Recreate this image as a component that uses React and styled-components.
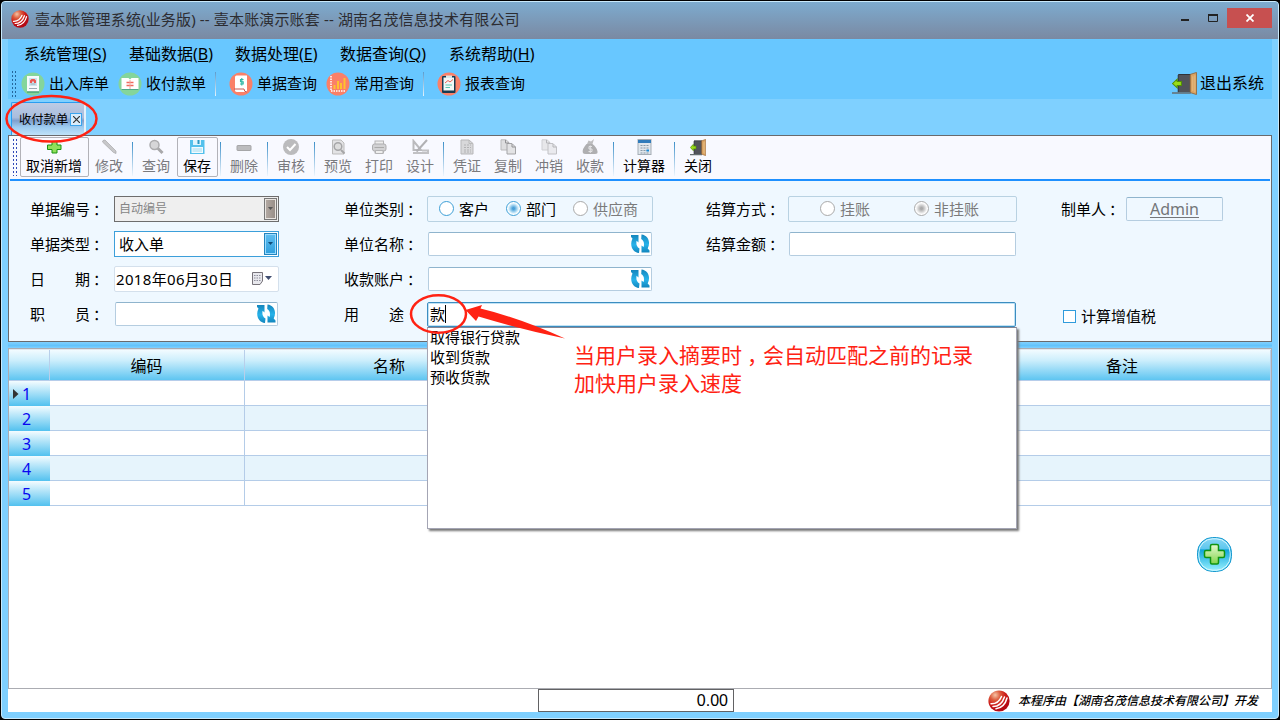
import React from "react";
import styled, { createGlobalStyle, css } from "styled-components";

const Global = createGlobalStyle`
  * { box-sizing: border-box; }
  body { margin: 0; overflow: hidden; background: #000; }
  body, button, input { font-family: "Noto Sans", "Noto Sans CJK SC", sans-serif; }
  svg { display: block; flex: none; }
`;

const Window = styled.div`
  width: 1280px;
  height: 720px;
  padding: 1px 1px 1px 1px;
  background: #000;
  color: #000;
  font-size: 15px;
  line-height: 20px;
  white-space: nowrap;
  position: relative;
  overflow: hidden;
`;
const Frame = styled.div`
  width: 1278px;
  height: 718px;
  border: 1px solid #c9e9fb;
  border-radius: 4px;
  background: #7fd0ff;
  overflow: hidden;
`;
const TitleBar = styled.header`
  height: 37px;
  display: flex;
  align-items: center;
  padding: 0 6px 3px 9px;
  background: linear-gradient(#7dabcf, #7a89a2);
  color: #2c2c31;
`;
const Title = styled.div`
  margin-left: 6px;
  flex: 1;
  letter-spacing: 0.15px;
`;
const WinControls = styled.div`
  display: flex;
  align-items: flex-start;
  height: 20px;
  margin-bottom: 2px;
`;
const WinButton = styled.div`
  width: ${(p) => p.$w}px;
  height: 20px;
  display: flex;
  align-items: center;
  justify-content: center;
  background: ${(p) => (p.$close ? "#c75050" : "transparent")};
`;
const Content = styled.div`
  margin: 0 6px 6px;
  height: 673px;
  display: flex;
  flex-direction: column;
`;
const TopPanel = styled.div`
  height: 60px;
  background: #68c7ff;
`;
const MenuBar = styled.nav`
  display: flex;
  height: 29px;
  align-items: center;
  padding: 0 0 0 16px;
  font-size: 16px;
`;
const MenuItem = styled.div`
  width: ${(p) => p.$w}px;
`;
const ToolBar = styled.div`
  height: 31px;
  display: flex;
  align-items: center;
`;
const ToolGrip = styled.div`
  width: 7px;
  margin: 0 3px 0 3px;
  height: 27px;
  background: radial-gradient(circle, #24669c 0 0.7px, transparent 1px) 0 0 / 3px 4px;
`;
const ToolItem = styled.div`
  display: flex;
  align-items: center;
  gap: 4px;
  width: 97px;
`;
const ToolText = styled.span`
  margin-top: -2px;
`;
const ToolSep = styled.i`
  width: 14px;
  height: 24px;
  border-left: 1px solid;
  border-image: linear-gradient(#5797c9, #e9f7ff) 1;
`;
const ExitItem = styled.div`
  display: flex;
  align-items: center;
  gap: 3px;
  margin-left: auto;
  padding-right: 8px;
  font-size: 16px;
`;
const TabStrip = styled.div`
  height: 36px;
  padding: 3px 0 0 3px;
`;
const Tab = styled.div`
  width: 75px;
  height: 33px;
  display: flex;
  align-items: center;
  padding: 2px 2px 0 7px;
  gap: 2px;
  font-size: 12.3px;
  border: 1px solid #2a9df0;
  border-width: 1px 2px 0 1px;
  border-right-color: #e4f1fa;
  border-radius: 2px 2px 0 0;
  background: linear-gradient(#bdcbe4 0, #a9bddd 45%, #809fcc 55%, #9dcbf0 75%, #bfe2f8 100%);
`;
const TabClose = styled.div`
  width: 13px;
  height: 13px;
  display: flex;
  align-items: center;
  justify-content: center;
  border: 1px solid #3ba5ee;
  background: #d9ecfb;
  margin-top: -1px;
`;
const FormPanel = styled.section`
  height: 207px;
  border: 1px solid #6a6a6c;
  background: #eff8ff;
`;
const ActionBar = styled.div`
  height: 45px;
  display: flex;
  align-items: flex-start;
  background: #f8f9ff;
  border-bottom: 2px solid #1e90ff;
  margin: 0 1px;
`;
const ActionGrip = styled.div`
  width: 7px;
  margin: 2px 1px 0 2px;
  height: 38px;
  background: radial-gradient(circle, #3048b8 0 0.7px, transparent 1px) 0 0 / 3px 4px;
`;
const Action = styled.div`
  width: ${(p) => p.$w || 41}px;
  height: 40px;
  margin-top: 1px;
  padding: 1px 1px 0 0;
  display: flex;
  flex-direction: column;
  align-items: center;
  border: 1px solid ${(p) => (p.$boxed ? "#b2b2b8" : "transparent")};
  border-radius: 2px;
  font-size: 14px;
  line-height: 19px;
  color: ${(p) => (p.$on ? "#000" : "#7a7a7e")};
`;
const ActionSep = styled.i`
  width: 1px;
  margin: 6px 3px 0 2px;
  height: 34px;
  background: linear-gradient(#3d8fc9, #eef5fd);
`;
const FormGrid = styled.div`
  display: grid;
  grid-template-columns: 314px 362px 355px 1fr;
  grid-auto-rows: 35px;
  padding: 10px 0 0 21px;
`;
const Field = styled.div`
  display: flex;
  align-items: center;
  grid-column: ${(p) => p.$col || "auto"};
  padding-top: ${(p) => p.$drop || 0}px;
`;
const Label = styled.div`
  width: ${(p) => p.$w}px;
  display: flex;
`;
const LabelText = styled.span`
  width: ${(p) => p.$w || 60}px;
  display: flex;
  justify-content: space-between;
`;
const Colon = styled.span`
  padding-left: 3px;
`;
const boxBase = css`
  width: ${(p) => p.$w}px;
  height: 26px;
  display: flex;
  align-items: center;
`;
const TextBox = styled.div`
  ${boxBase}
  height: 24px;
  width: ${(p) => p.$w}px;
  margin-left: 1px;
  justify-content: flex-end;
  padding-right: 1px;
  border: 1px solid #b5cde0;
  border-top-color: #8fb4cd;
  border-radius: 2px;
  background: #fff;
`;
const Select = styled.div`
  ${boxBase}
  justify-content: space-between;
  padding: 0 1px 0 4px;
  border: 1px solid ${(p) => (p.$off ? "#6d6d6d" : "#3c9fda")};
  background: ${(p) => (p.$off ? "#efefef" : "#fff")};
  color: ${(p) => (p.$off ? "#858585" : "#000")};
  font-size: ${(p) => (p.$off ? 12 : 15)}px;
`;
const SelectButton = styled.div`
  width: 13px;
  height: 22px;
  display: flex;
  align-items: center;
  justify-content: center;
  border: 1px solid ${(p) => (p.$off ? "#777" : "#2484bd")};
  box-shadow: inset 0 0 0 1px ${(p) => (p.$off ? "#e8e4e0" : "#9bdcff")};
  background: ${(p) => (p.$off ? "linear-gradient(90deg,#b5aba4,#958c86)" : "linear-gradient(#5fbdf0,#2f9fdd)")};
`;
const DateBox = styled.div`
  ${boxBase}
  padding: 0 6px 0 1px;
  border: 1px solid #d4e0ec;
  border-radius: 2px;
  background: #fff;
`;
const DateText = styled.span`
  flex: 1;
  letter-spacing: 0.33px;
`;
const RadioGroup = styled.div`
  ${boxBase}
  padding-left: ${(p) => p.$pad}px;
  border: 1px solid #b9d2e2;
  border-radius: 2px;
`;
const Radio = styled.div`
  display: flex;
  align-items: center;
  gap: 5px;
  width: ${(p) => p.$w}px;
  color: ${(p) => (p.$off ? "#7b7b7b" : "#000")};
`;
const RadioDot = styled.i`
  width: 15px;
  height: 15px;
  border-radius: 50%;
  border: 1px solid ${(p) => (p.$off ? "#a9a9a9" : "#3d9fd6")};
  background: ${(p) =>
    p.$checked
      ? p.$off
        ? "radial-gradient(circle, #aaa 0 1px, #ccc 3px, #f2f2f2 5px, #fff 6px)"
        : "radial-gradient(circle, #4aa0d8 0 1px, #93cbec 3px, #e0f3fc 5px, #fff 6px)"
      : "#fff"};
`;
const AdminBox = styled.div`
  ${boxBase}
  height: 24px;
  justify-content: center;
  border: 1px solid #b5cde0;
  border-top-color: #8fb4cd;
  border-radius: 2px;
  color: #747679;
  font-size: 16px;
  text-decoration: underline;
  text-underline-offset: 2px;
`;
const Combo = styled.div`
  position: relative;
  width: 589px;
  margin-top: 2px;
`;
const ComboInput = styled.div`
  height: 25px;
  display: flex;
  align-items: center;
  padding-left: 2px;
  padding-bottom: 1px;
  border: 1px solid #3c8dc0;
  box-shadow: inset 0 0 0 1px #c0e2f5;
  border-radius: 2px;
  background: #fff;
`;
const Caret = styled.i`
  width: 1px;
  height: 18px;
  background: #000;
`;
const Suggestions = styled.div`
  position: absolute;
  z-index: 2;
  top: 25px;
  left: 0;
  width: 590px;
  height: 202px;
  padding: 0 2px;
  border: 1px solid #a4a5b4;
  border-top-color: #858694;
  background: #fff;
  box-shadow: 2px 2px 2px #777;
`;
const Suggestion = styled.div`
  height: 20px;
  line-height: 18px;
`;
const Check = styled.div`
  display: flex;
  align-items: center;
  gap: 5px;
  margin-left: 2px;
`;
const CheckBox = styled.i`
  width: 13px;
  height: 13px;
  border: 1px solid #2f9bdc;
  background: #fff;
`;
const Splitter = styled.div`
  height: 6px;
  background: linear-gradient(#80d0ff, #62c3fb 60%, #80d0ff);
`;
const Sheet = styled.section`
  height: 341px;
  border: 1px solid #abacb2;
  background: #fff;
`;
const gridCols = css`
  display: grid;
  grid-template-columns: 41px 195px 290px 440px 1fr;
`;
const HeadRow = styled.div`
  ${gridCols}
  height: 32px;
  border-bottom: 1px solid #b7cdea;
  border-top: 1px solid #dfe7ef;
`;
const HeadCell = styled.div`
  display: flex;
  align-items: center;
  justify-content: center;
  padding: 1px 1px 0 0;
  font-size: 16px;
  border-right: 1px solid #b8cfea;
  background: linear-gradient(#f2fbff 0, #cceefc 35%, #5ec5f1 100%);
`;
const Row = styled.div`
  ${gridCols}
  height: 25px;
`;
const Cell = styled.div`
  border-right: 1px solid #b4cce8;
  border-bottom: 1px solid #b4cce8;
  background: ${(p) => (p.$alt ? "#e6f4fc" : "#fff")};
`;
const RowHead = styled.div`
  display: flex;
  align-items: center;
  padding-left: 4px;
  font-size: 16px;
  color: #0808f0;
  background: linear-gradient(#f4fcff, #52c1ef);
`;
const Marker = styled.span`
  width: 9px;
`;
const StatusBar = styled.footer`
  height: 23px;
  display: flex;
  align-items: center;
  padding-left: 530px;
  background: #fff;
`;
const Total = styled.div`
  width: 196px;
  height: 23px;
  border: 1px solid #626264;
  padding-right: 5px;
  text-align: right;
  font: 16px/22px "Liberation Sans", sans-serif;
`;
const Credit = styled.div`
  margin-left: auto;
  padding-right: 14px;
  display: flex;
  align-items: center;
  gap: 8px;
  font-size: 12px;
  font-weight: 500;
  font-style: italic;
`;
const AddButton = styled.div`
  position: absolute;
  left: 1197px;
  top: 537px;
`;
const Note = styled.div`
  position: absolute;
  z-index: 3;
  left: 574px;
  top: 341px;
  color: #ff2213;
  font-size: 21px;
  line-height: 28px;
`;
const Comma = styled.span`
  padding: 0 5.5px 0 5px;
  font-feature-settings: "halt";
`;
const Marks = styled.svg`
  position: absolute;
  z-index: 4;
  left: 0;
  top: 0;
`;

const Logo = ({ id, size }) => (
  <svg width={size} height={size} viewBox="0 0 22 22">
    <defs>
      <radialGradient id={id} cx=".32" cy=".22" r=".7">
        <stop offset="0" stopColor="#f6c3a4" />
        <stop offset=".35" stopColor="#dc5b3d" />
        <stop offset=".7" stopColor="#cc1a18" />
        <stop offset="1" stopColor="#b50a14" />
      </radialGradient>
    </defs>
    <circle cx="11" cy="11" r="10.6" fill={`url(#${id})`} />
    <path d="M3 13.800C8 14 11.500 11.500 13.500 6.500M5 16.500C10.500 16.500 14.500 13 16.500 7M8 18.800C13 18 17.500 14 19 8" fill="none" stroke="#fff" strokeWidth="1.500" strokeLinecap="round" />
  </svg>
);

const Refresh = () => (
  <svg width="20" height="20" viewBox="0 0 20 20">
    <defs>
      <linearGradient id="rf" x1="0" y1="0" x2="0" y2="1">
        <stop offset="0" stopColor="#1486bd" />
        <stop offset=".55" stopColor="#27b3ea" />
        <stop offset="1" stopColor="#1285bd" />
      </linearGradient>
    </defs>
    <path d="M1 1H8.500V8.500L6.600 6.800C6 10 6.500 12.800 9.500 14.500L9 19C2.500 18.500-.8 11 2.500 4.500L1 3Z" fill="url(#rf)" />
    <path d="M19.500 18.500H11.500V11.500L13.600 13C14.500 9.500 14 6.800 11.200 5L11.500 .5C18 1.200 21 8 17.700 14.500L19.500 16.500Z" fill="url(#rf)" />
  </svg>
);

const Door = ({ w, h }) => (
  <svg width={w} height={h} viewBox="0 0 24 24" preserveAspectRatio="none">
    <path d="M6 2.500H18V21H6Z" fill="#51535a" />
    <path d="M6 2.500H18M6 3V21" stroke="#303238" />
    <path d="M17.500 2.500L23.500 .5V23.500L17.500 21.500Z" fill="#d9a262" stroke="#92602e" strokeWidth=".8" />
    <path d="M20 4.500V20M22 3.500V21" stroke="#edc791" strokeWidth=".7" />
    <path d="M0 22H18" stroke="#656d70" strokeWidth="1.600" />
    <path d="M.5 12L5 7.500V10H9V14H5V16.500Z" fill="#9add19" stroke="#518e05" />
  </svg>
);

const toolArt = {
  stock: (
    <>
      <circle cx="12" cy="12" r="11.500" fill="#84d59b" />
      <rect x="6" y="4" width="12" height="15.500" fill="#f8fafc" />
      <rect x="8" y="6" width="8" height="8" fill="#cfe5ef" />
      <path d="M9 11V8.500L10.500 7H13.500L15 8.500V11H13V9.500H11V11Z" fill="#ed5751" />
      <path d="M9.500 12h5M8 16.500h8" stroke="#9aa9b4" strokeWidth="1" />
      <path d="M6 20h12" stroke="#2f8b68" strokeWidth="1" />
    </>
  ),
  pay: (
    <>
      <circle cx="12" cy="12" r="11.500" fill="#84d59b" />
      <path d="M3.500 6H10.500L12 7.500L13.500 6H20.500V17.500H3.500Z" fill="#fff" />
      <path d="M8.500 10.500H15.500M8.500 13.500H15.500" fill="none" stroke="#f0695c" strokeWidth="1.600" />
      <path d="M12 8V17" stroke="#f0a59c" />
      <path d="M3.500 17.500H20.500" stroke="#4cab87" />
    </>
  ),
  bill: (
    <>
      <circle cx="12" cy="12" r="11.500" fill="#fa8068" />
      <path d="M6 5Q6 3.500 7.500 3.500H18V20H8Q5.500 20 6 17Z" fill="#fff" />
      <path d="M14.500 7.500H11.500V9.700H14.200V12H11M12.800 6V13.500" fill="none" stroke="#30b7a5" strokeWidth="1.100" />
      <path d="M5 17H15Q15 20 18 20" fill="none" stroke="#c95750" />
    </>
  ),
  chart: (
    <>
      <circle cx="12" cy="12" r="11.500" fill="#fa8068" />
      <path d="M5 4V19H20" fill="none" stroke="#fff" strokeWidth="1.500" strokeDasharray="1.500 1" />
      <path d="M8.500 17V13M12 17V9M15 17V11M18.500 17V6" stroke="#ffc22e" strokeWidth="2" />
    </>
  ),
  report: (
    <>
      <circle cx="12" cy="12" r="11.500" fill="#fa8068" />
      <rect x="5" y="4" width="13.500" height="17" rx="1" fill="#173b50" />
      <rect x="6.500" y="5.500" width="10.500" height="13" fill="#f3f8f7" />
      <rect x="9" y="3.500" width="6" height="2.500" fill="#d8e8e9" />
      <path d="M8 11L11 8.500L13 10L16 7.500" fill="none" stroke="#eb5d51" />
      <path d="M8.500 13H15M8.500 15.500H13" stroke="#5cc5af" strokeWidth="1.200" />
    </>
  ),
};
const ToolIcon = ({ name }) => (
  <svg width="24" height="24" viewBox="0 0 24 24">{toolArt[name]}</svg>
);

const actionArt = {
  add: <path d="M6 2.500H11V6H15V10.500H11V14H6V10.500H1.500V6H6Z" fill="#8fdf5a" stroke="#199313" />,
  edit: <path d="M2 1.500L4 1L15 12V14.500L12.500 13.500L1.500 3Z" fill="#c7c7c9" stroke="#a8a8aa" strokeWidth=".7" />,
  find: (
    <>
      <path d="M9.500 9L14.500 14" stroke="#a8a8aa" strokeWidth="3" />
      <circle cx="6.500" cy="6" r="4.500" fill="#d6d6d8" stroke="#acacae" strokeWidth="1.500" />
    </>
  ),
  save: (
    <>
      <path d="M1 1H15.500V15H1Z" fill="#54c1ec" />
      <path d="M4 1H12V6H4Z" fill="#ddf4fd" />
      <path d="M9.500 1V5" stroke="#2996c2" strokeWidth="2" />
      <path d="M2.500 8H14V14H2.500Z" fill="#f1fbff" />
      <path d="M3.500 10H13M3.500 12H13" stroke="#a2dbed" />
    </>
  ),
  del: <rect x="1" y="6.500" width="14" height="5" rx=".6" fill="#bcbcbe" stroke="#a6a6a8" />,
  audit: (
    <>
      <circle cx="8" cy="8" r="8" fill="#bbbbbd" />
      <path d="M4 8L7 11L12.500 5" fill="none" stroke="#fff" strokeWidth="2" />
    </>
  ),
  preview: (
    <>
      <path d="M2.500 1H11L14 4V15H2.500Z" fill="#e3e3e5" stroke="#bbb" />
      <circle cx="8" cy="7.500" r="3.800" fill="#ddd" stroke="#a6a6a8" strokeWidth="1.500" />
      <path d="M11 11L14.500 14.500" stroke="#a6a6a8" strokeWidth="2" />
    </>
  ),
  print: (
    <>
      <rect x="4" y="2" width="8.500" height="12" fill="#eee" stroke="#b4b4b6" />
      <rect x="1.500" y="5" width="13.500" height="7" rx="2" fill="#d2d2d4" stroke="#adadaf" />
      <path d="M3.500 8.500H13" stroke="#aaa" />
      <path d="M4.500 11.500H12V14.500H4.500Z" fill="#eee" stroke="#b4b4b6" />
    </>
  ),
  design: (
    <>
      <path d="M1.500 2V11H9Z" fill="none" stroke="#bababd" strokeWidth="2" />
      <path d="M15 1L6 11L4.500 12.500" stroke="#b1b1b4" strokeWidth="2" fill="none" />
      <path d="M1 14H16V11.500H10" fill="none" stroke="#c1c1c4" strokeWidth="2" />
    </>
  ),
  voucher: (
    <>
      <path d="M2 1H10L14 4.500V15H2Z" fill="#d8d8da" stroke="#b7b7b9" />
      <path d="M5 6H12M5 8.500H12M5 11H12M5 13H12" stroke="#b2b2b4" strokeDasharray="2 1" />
      <path d="M10 1V4.500H14" fill="none" stroke="#bbb" />
    </>
  ),
  copy: (
    <>
      <path d="M1 .8H6L9 3.500V11H1Z" fill="#dedee0" stroke="#bababc" />
      <path d="M7 4.500H12L15.500 8V15H7Z" fill="#e3e3e5" stroke="#a4a4a7" />
      <path d="M5.500 1V4H9M12 5V8H15.500" fill="none" stroke="#929295" />
    </>
  ),
  cash: (
    <>
      <path d="M4.500 5Q0 10 .8 13.500Q1 15 4 15H13Q16 15 15.500 12.500Q15 8.500 10.500 5Z" fill="#afafb1" />
      <path d="M5 5L6.500 1.500L9 2.500L12 0L10.500 5Z" fill="#bdbdbf" />
      <path d="M10 7.500H7V10H10V12.500H6.500M8.300 6.500V14" fill="none" stroke="#e3e3e5" />
    </>
  ),
  calc: (
    <>
      <rect x="2" y=".5" width="13" height="15" fill="#e0e6ec" stroke="#a5adb5" />
      <rect x="2" y="1" width="13" height="3" fill="#307bbb" />
      <path d="M4.500 6.500H13M4.500 9H13M4.500 11.500H13M4.500 14H13" stroke="#8999a7" strokeDasharray="2 1" />
      <path d="M10.500 11.500H13" stroke="#198cd9" strokeWidth="2" />
    </>
  ),
};
const ActionIcon = ({ name }) =>
  name === "close" ? (
    <Door w={16} h={17} />
  ) : (
    <svg width="17" height="17" viewBox="0 0 17 17" opacity={name === "undo" ? 0.65 : 1}>
      {actionArt[name === "undo" ? "copy" : name]}
    </svg>
  );

const menus = [
  ["系统管理", "S", 105],
  ["基础数据", "B", 106],
  ["数据处理", "E", 105],
  ["数据查询", "Q", 109],
  ["系统帮助", "H", 100],
];
const tools = [["stock", "出入库单"], ["pay", "收付款单"], null, ["bill", "单据查询"], ["chart", "常用查询"], null, ["report", "报表查询"]];
const actions = [
  { icon: "add", text: "取消新增", on: true, boxed: true, w: 69 },
  { icon: "edit", text: "修改" },
  null,
  { icon: "find", text: "查询" },
  { icon: "save", text: "保存", on: true, boxed: true },
  null,
  { icon: "del", text: "删除" },
  null,
  { icon: "audit", text: "审核" },
  null,
  { icon: "preview", text: "预览" },
  { icon: "print", text: "打印" },
  { icon: "design", text: "设计" },
  null,
  { icon: "voucher", text: "凭证" },
  { icon: "copy", text: "复制" },
  { icon: "undo", text: "冲销" },
  { icon: "cash", text: "收款" },
  null,
  { icon: "calc", text: "计算器", on: true, w: 55 },
  null,
  { icon: "close", text: "关闭", on: true },
];

const FieldLabel = ({ text, w, tw, bare }) => (
  <Label $w={w}>
    <LabelText $w={tw}>{text.length === 2 ? [...text].map((c) => <span key={c}>{c}</span>) : text}</LabelText>
    {!bare && <Colon>：</Colon>}
  </Label>
);
const Option = ({ w, off, checked, children }) => (
  <Radio $w={w} $off={off}>
    <RadioDot $off={off} $checked={checked} />
    {children}
  </Radio>
);
const Triangle = ({ color }) => (
  <svg width="7" height="4" viewBox="0 0 7 4"><path d="M1 0H6L3.500 3Z" fill={color} /></svg>
);

export default function App() {
  return (
    <Window>
      <Global />
      <Frame>
        <TitleBar>
          <Logo id="logo-small" size={18} />
          <Title>壹本账管理系统(业务版) -- 壹本账演示账套 -- 湖南名茂信息技术有限公司</Title>
          <WinControls>
            <WinButton $w={28}>
              <svg width="8" height="8"><path d="M0 6H8" stroke="#222" strokeWidth="2" /></svg>
            </WinButton>
            <WinButton $w={28}>
              <svg width="10" height="8"><path d="M.5 0V7.500H9.500V0M0 1H10" fill="none" stroke="#222" /><path d="M0 1H10" stroke="#222" strokeWidth="2" /></svg>
            </WinButton>
            <WinButton $w={45} $close>
              <svg width="8" height="8"><path d="M.5 .5L7.500 7.500M7.500 .5L.5 7.500" stroke="#fff" strokeWidth="1.800" /></svg>
            </WinButton>
          </WinControls>
        </TitleBar>
        <Content>
          <TopPanel>
            <MenuBar>
              {menus.map(([t, k, w]) => (
                <MenuItem key={k} $w={w}>{t}(<u>{k}</u>)</MenuItem>
              ))}
            </MenuBar>
            <ToolBar>
              <ToolGrip />
              {tools.map((t, i) =>
                t ? (
                  <ToolItem key={i}><ToolIcon name={t[0]} /><ToolText>{t[1]}</ToolText></ToolItem>
                ) : (
                  <ToolSep key={i} />
                )
              )}
              <ExitItem><Door w={25} h={23} /><ToolText>退出系统</ToolText></ExitItem>
            </ToolBar>
          </TopPanel>
          <TabStrip>
            <Tab>
              收付款单
              <TabClose>
                <svg width="7" height="7"><path d="M0 0L7 7M7 0L0 7" stroke="#333" strokeWidth="1.200" /></svg>
              </TabClose>
            </Tab>
          </TabStrip>
          <FormPanel>
            <ActionBar>
              <ActionGrip />
              {actions.map((a, i) =>
                a ? (
                  <Action key={i} $w={a.w} $on={a.on} $boxed={a.boxed}>
                    <ActionIcon name={a.icon} />
                    {a.text}
                  </Action>
                ) : (
                  <ActionSep key={i} />
                )
              )}
            </ActionBar>
            <FormGrid>
              <Field>
                <FieldLabel text="单据编号" w={84} />
                <Select $w={165} $off>自动编号<SelectButton $off><Triangle color="#555" /></SelectButton></Select>
              </Field>
              <Field>
                <FieldLabel text="单位类别" w={83} />
                <RadioGroup $w={226} $pad={11}>
                  <Option w={67}>客户</Option>
                  <Option w={67} checked>部门</Option>
                  <Option w={67} off>供应商</Option>
                </RadioGroup>
              </Field>
              <Field>
                <FieldLabel text="结算方式" w={82} />
                <RadioGroup $w={229} $pad={31}>
                  <Option w={94} off>挂账</Option>
                  <Option w={70} off checked>非挂账</Option>
                </RadioGroup>
              </Field>
              <Field>
                <FieldLabel text="制单人" w={65} tw={45} />
                <AdminBox $w={97}>Admin</AdminBox>
              </Field>

              <Field>
                <FieldLabel text="单据类型" w={84} />
                <Select $w={165}>收入单<SelectButton><Triangle color="#124c78" /></SelectButton></Select>
              </Field>
              <Field>
                <FieldLabel text="单位名称" w={83} />
                <TextBox $w={224}><Refresh /></TextBox>
              </Field>
              <Field>
                <FieldLabel text="结算金额" w={82} />
                <TextBox $w={227} />
              </Field>

              <Field $col="1">
                <FieldLabel text="日期" w={84} />
                <DateBox $w={165}>
                  <DateText>2018年06月30日</DateText>
                  <svg width="20" height="13" viewBox="0 0 20 13">
                    <path d="M.5 .5H10.500V9L8 12.500H.5Z" fill="#e8e8ed" stroke="#77737a" />
                    <path d="M2 3.500H9M2 6H9M2 8.500H9" stroke="#8e8e9b" strokeDasharray="1.500 1" />
                    <path d="M13 4H20L16.500 8Z" fill="#414d70" />
                  </svg>
                </DateBox>
              </Field>
              <Field $col="2">
                <FieldLabel text="收款账户" w={83} />
                <TextBox $w={224}><Refresh /></TextBox>
              </Field>

              <Field $col="1">
                <FieldLabel text="职员" w={84} />
                <TextBox $w={163}><Refresh /></TextBox>
              </Field>
              <Field $col="2 / 4">
                <FieldLabel text="用途" w={83} bare />
                <Combo>
                  <ComboInput>款<Caret /></ComboInput>
                  <Suggestions>
                    <Suggestion>取得银行贷款</Suggestion>
                    <Suggestion>收到货款</Suggestion>
                    <Suggestion>预收货款</Suggestion>
                  </Suggestions>
                </Combo>
              </Field>
              <Field $col="4" $drop={5}>
                <Check><CheckBox />计算增值税</Check>
              </Field>
            </FormGrid>
          </FormPanel>
          <Splitter />
          <Sheet>
            <HeadRow>
              <HeadCell />
              <HeadCell>编码</HeadCell>
              <HeadCell>名称</HeadCell>
              <HeadCell />
              <HeadCell>备注</HeadCell>
            </HeadRow>
            {[1, 2, 3, 4, 5].map((n) => (
              <Row key={n}>
                <RowHead>
                  <Marker>
                    {n === 1 && <svg width="6" height="10"><path d="M0 0L5.500 5L0 10Z" fill="#333" /></svg>}
                  </Marker>
                  {n}
                </RowHead>
                {[0, 1, 2, 3].map((c) => <Cell key={c} $alt={n % 2 === 0} />)}
              </Row>
            ))}
          </Sheet>
          <StatusBar>
            <Total>0.00</Total>
            <Credit><Logo id="logo-large" size={22} />本程序由【湖南名茂信息技术有限公司】开发</Credit>
          </StatusBar>
        </Content>
      </Frame>
      <AddButton>
        <svg width="35" height="35" viewBox="0 0 35 35">
          <defs>
            <linearGradient id="ab" x1="0" y1="0" x2="0" y2="1">
              <stop offset="0" stopColor="#8bd9f5" />
              <stop offset=".34" stopColor="#5dc6ee" />
              <stop offset=".36" stopColor="#0fa3dc" />
              <stop offset="1" stopColor="#9bf3ff" />
            </linearGradient>
            <linearGradient id="ap" x1="0" y1="0" x2="0" y2="1">
              <stop offset="0" stopColor="#e4f9cf" />
              <stop offset="1" stopColor="#83d44c" />
            </linearGradient>
          </defs>
          <rect x=".5" y=".5" width="34" height="34" rx="15" fill="url(#ab)" stroke="#1a9bd0" />
          <rect x="1.800" y="1.800" width="31.400" height="31.400" rx="14" fill="none" stroke="#d5f5ff" />
          <path d="M15 7.500H20Q21.500 7.500 21.500 9V13.500H26Q27.500 13.500 27.500 15V19Q27.500 20.500 26 20.500H21.500V25.500Q21.500 27 20 27H15Q13.500 27 13.500 25.500V20.500H9Q7.500 20.500 7.500 19V15Q7.500 13.500 9 13.500H13.500V9Q13.500 7.500 15 7.500Z" fill="url(#ap)" stroke="#109411" strokeWidth="1.500" />
        </svg>
      </AddButton>
      <Note>
        <div>当用户录入摘要时<Comma>，</Comma>会自动匹配之前的记录</div>
        <div>加快用户录入速度</div>
      </Note>
      <Marks width="600" height="360" viewBox="0 0 600 360">
        <ellipse cx="51.500" cy="118.800" rx="45" ry="22.800" fill="none" stroke="#ff2213" strokeWidth="2.500" />
        <ellipse cx="438.500" cy="314" rx="27.500" ry="18.800" fill="none" stroke="#ff2213" strokeWidth="2.500" />
        <path d="M465.500 310L482 305L480.500 308.500Q520 318 565 338.500Q520 329 478.500 316.500L476 321Z" fill="#ff2213" />
      </Marks>
    </Window>
  );
}
